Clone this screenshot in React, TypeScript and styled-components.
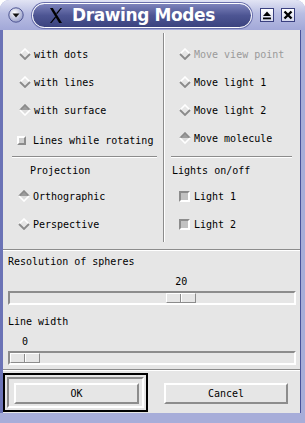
import React from 'react';
import styled, { createGlobalStyle } from 'styled-components';

const GlobalStyle = createGlobalStyle`
  html, body { margin: 0; padding: 0; background: #ffffff; }
  * { box-sizing: border-box; }
`;

const BG = '#e6e6e6';
const SHADOW = '#8c8c8c';
const LIGHT = '#ffffff';

const Window = styled.div`
  width: 305px;
  height: 423px;
  display: flex;
  flex-direction: column;
  background: #a7add9;
  border-radius: 9px 9px 0 0;
  overflow: hidden;
  font-family: "DejaVu Sans Mono", "Liberation Mono", monospace;
  font-size: 10px;
  color: #000;
`;

const TitleBar = styled.div`
  height: 30px;
  flex: none;
  display: flex;
  align-items: center;
  padding: 0 10px 0 8px;
  background: linear-gradient(180deg, #e2e4f4 0%, #b9bee3 45%, #a2a8d8 100%);
`;

const TitlePill = styled.div`
  margin-left: 8px;
  width: 220px;
  height: 25px;
  border-radius: 13px;
  border: 1.5px solid #ffffff;
  box-shadow: 0 0 0 1px #6a70ac;
  background: linear-gradient(180deg, #7d83bb 0%, #4d5593 50%, #3b437f 100%);
  display: flex;
  align-items: center;
  gap: 10px;
  padding-left: 17px;
  color: #ffffff;
  font-family: "DejaVu Sans", "Liberation Sans", sans-serif;
  font-weight: 700;
  font-size: 17px;
  letter-spacing: -0.4px;
`;

const TitleButtons = styled.div`
  margin-left: auto;
  display: flex;
  gap: 7px;
`;

const TitleButton = styled.div`
  width: 14px;
  height: 14px;
  border: 1px solid #3a4080;
  background: linear-gradient(180deg, #ffffff, #d6d9ee);
  display: flex;
  align-items: center;
  justify-content: center;
`;

const Body = styled.div`
  flex: 1;
  display: flex;
  flex-direction: column;
  margin: 0 4px 10px 0;
  background: ${BG};
  border-left: 3px solid #6b73b6;
  border-right: 1px solid #4a5299;
`;

const Options = styled.div`
  height: 219px;
  flex: none;
  display: flex;
`;

const Column = styled.div<{ $width?: number }>`
  ${p => (p.$width ? `width: ${p.$width}px;` : 'flex: 1;')}
  display: flex;
  flex-direction: column;
`;

const ColTop = styled.div`
  height: 126px;
  padding-top: 10px;
  display: flex;
  flex-direction: column;
`;

const VSep = styled.div`
  width: 2px;
  margin: 3px 0 7px;
  border-left: 1px solid ${SHADOW};
  border-right: 1px solid ${LIGHT};
`;

const Etched = styled.div<{ $left?: number; $right?: number; $top?: number }>`
  height: 2px;
  flex: none;
  border-top: 1px solid ${SHADOW};
  border-bottom: 1px solid ${LIGHT};
  margin: ${p => p.$top ?? 0}px ${p => p.$right ?? 0}px 0 ${p => p.$left ?? 0}px;
`;

const Row = styled.div<{ $indent: number; $height?: number; $gap?: number }>`
  height: ${p => p.$height ?? 28}px;
  flex: none;
  display: flex;
  align-items: center;
  gap: ${p => p.$gap ?? 3}px;
  padding-left: ${p => p.$indent}px;
  white-space: nowrap;
`;

const Label = styled.span<{ $disabled?: boolean }>`
  color: ${p => (p.$disabled ? '#9a9a9a' : '#000')};
`;

const Heading = styled.div<{ $indent: number }>`
  height: 24px;
  display: flex;
  align-items: center;
  padding-left: ${p => p.$indent}px;
`;

const SmallCheck = styled.span`
  width: 9px;
  height: 9px;
  flex: none;
  background: #cfcfcf;
  border: 2px solid;
  border-color: ${LIGHT} ${SHADOW} ${SHADOW} ${LIGHT};
`;

const LightCheck = styled.span`
  width: 11px;
  height: 11px;
  flex: none;
  background: #c2c2c2;
  border: 2px solid;
  border-color: ${SHADOW} ${LIGHT} ${LIGHT} ${SHADOW};
`;

const SliderBlock = styled.div`
  padding: 0 4px 0 5px;
`;

const SliderLabel = styled.div<{ $top: number }>`
  height: 12px;
  line-height: 12px;
  margin-top: ${p => p.$top}px;
`;

const ValueRow = styled.div`
  height: 12px;
  line-height: 12px;
  margin-top: 8px;
`;

const Trough = styled.div`
  height: 14px;
  margin-top: 3px;
  position: relative;
  background: ${BG};
  border: 2px solid;
  border-color: ${SHADOW} ${LIGHT} ${LIGHT} ${SHADOW};
`;

const Thumb = styled.div`
  position: absolute;
  top: 0;
  width: 30px;
  height: 10px;
  display: flex;
  background: ${BG};
  border: 1px solid;
  border-color: ${LIGHT} ${SHADOW} ${SHADOW} ${LIGHT};
`;

const ThumbHalf = styled.span`
  flex: 1;
  & + & {
    border-left: 1px solid ${LIGHT};
  }
  &:first-child {
    border-right: 1px solid ${SHADOW};
  }
`;

const ButtonRow = styled.div`
  display: flex;
  align-items: flex-start;
  margin-top: 2px;
`;

const DefaultFrame = styled.div`
  border: 2px solid #000;
  padding: 2px;
`;

const DefaultWell = styled.div`
  border: 2px solid;
  border-color: ${SHADOW} ${LIGHT} ${LIGHT} ${SHADOW};
  padding: 4px 3px 2px 5px;
`;

const Button = styled.button<{ $width: number; $offset?: number }>`
  width: ${p => p.$width}px;
  height: 21px;
  margin: ${p => (p.$offset ? `10px 0 0 ${p.$offset}px` : '0')};
  padding: 0;
  background: ${BG};
  border: 2px solid;
  border-color: ${LIGHT} ${SHADOW} ${SHADOW} ${LIGHT};
  font-family: "DejaVu Sans Mono", "Liberation Mono", monospace;
  font-size: 10px;
  color: #000;
`;

const Diamond = ({ on }: { on?: boolean }) => (
  <svg width="12" height="12" viewBox="0 0 12 12" style={{ flex: 'none' }}>
    {on ? (
      <>
        <polygon points="1,6 6,1 11,6" fill="#9c9c9c" />
        <polygon points="1,6 6,11 11,6" fill="#dcdcdc" />
        <polyline points="1,6 6,1 11,6" fill="none" stroke="#8a8a8a" strokeWidth="1.6" />
        <polyline points="1,6 6,11 11,6" fill="none" stroke="#ffffff" strokeWidth="1.6" />
      </>
    ) : (
      <>
        <polygon points="1,6 6,1 11,6 6,11" fill="#e6e6e6" />
        <polyline points="1,6 6,1 11,6" fill="none" stroke="#ffffff" strokeWidth="1.6" />
        <polyline points="1,6 6,11 11,6" fill="none" stroke="#8a8a8a" strokeWidth="1.8" />
      </>
    )}
  </svg>
);

const Radio = ({ label, on, indent, disabled }: { label: string; on?: boolean; indent: number; disabled?: boolean }) => (
  <Row $indent={indent}>
    <Diamond on={on} />
    <Label $disabled={disabled}>{label}</Label>
  </Row>
);

const Slider = ({ label, value, min, max, top }: { label: string; value: number; min: number; max: number; top: number }) => {
  const travel = 284 - 30;
  const left = ((value - min) / (max - min)) * travel;
  const text = String(value);
  const pad = 2 + left + 15 - (text.length * 6) / 2;
  return (
    <SliderBlock>
      <SliderLabel $top={top}>{label}</SliderLabel>
      <ValueRow style={{ paddingLeft: pad }}>{text}</ValueRow>
      <Trough>
        <Thumb style={{ left }}>
          <ThumbHalf />
          <ThumbHalf />
        </Thumb>
      </Trough>
    </SliderBlock>
  );
};

const MenuIcon = () => (
  <svg width="16" height="16" viewBox="0 0 16 16">
    <defs>
      <radialGradient id="mb" cx="40%" cy="35%" r="70%">
        <stop offset="0%" stopColor="#ffffff" />
        <stop offset="100%" stopColor="#9299c6" />
      </radialGradient>
    </defs>
    <circle cx="8" cy="8" r="7.2" fill="url(#mb)" stroke="#4f5693" strokeWidth="1" />
    <polygon points="4.5,6.5 11.5,6.5 8,10.5" fill="#111" />
  </svg>
);

const XLogo = () => (
  <svg width="12" height="15" viewBox="0 0 12 15">
    <polygon points="0,0 2.8,0 12,15 9.2,15" fill="#000" />
    <polygon points="10.6,0 12,0 7,6.2 6.2,5.3" fill="#000" />
    <polygon points="5.2,8.6 6,9.6 1.4,15 0,15" fill="#000" />
  </svg>
);

const EjectIcon = () => (
  <svg width="10" height="10" viewBox="0 0 10 10">
    <polygon points="1,6 5,1.5 9,6" fill="#000" />
    <rect x="1" y="7.5" width="8" height="1.8" fill="#000" />
  </svg>
);

const CloseIcon = () => (
  <svg width="10" height="10" viewBox="0 0 10 10">
    <path d="M1.5 1.5 L8.5 8.5 M8.5 1.5 L1.5 8.5" stroke="#000" strokeWidth="2.4" />
  </svg>
);

export default function App() {
  return (
    <>
      <GlobalStyle />
      <Window>
        <TitleBar>
          <MenuIcon />
          <TitlePill>
            <XLogo />
            <span>Drawing Modes</span>
          </TitlePill>
          <TitleButtons>
            <TitleButton><EjectIcon /></TitleButton>
            <TitleButton><CloseIcon /></TitleButton>
          </TitleButtons>
        </TitleBar>
        <Body>
          <Options>
            <Column $width={160}>
              <ColTop>
                <Radio label="with dots" indent={16} />
                <Radio label="with lines" indent={16} />
                <Radio label="with surface" indent={16} on />
                <Row $indent={14} $height={32} $gap={7}>
                  <SmallCheck />
                  <Label>Lines while rotating</Label>
                </Row>
              </ColTop>
              <Etched $left={9} $right={6} />
              <Heading $indent={27}>Projection</Heading>
              <Radio label="Orthographic" indent={15} on />
              <Radio label="Perspective" indent={15} />
            </Column>
            <VSep />
            <Column>
              <ColTop>
                <Radio label="Move view point" indent={14} disabled />
                <Radio label="Move light 1" indent={14} />
                <Radio label="Move light 2" indent={14} />
                <Radio label="Move molecule" indent={14} on />
              </ColTop>
              <Etched $left={6} $right={8} />
              <Heading $indent={7}>Lights on/off</Heading>
              <Row $indent={14} $gap={4}>
                <LightCheck />
                <Label>Light 1</Label>
              </Row>
              <Row $indent={14} $gap={4}>
                <LightCheck />
                <Label>Light 2</Label>
              </Row>
            </Column>
          </Options>
          <Etched />
          <Slider label="Resolution of spheres" value={20} min={4} max={30} top={5} />
          <Slider label="Line width" value={0} min={0} max={10} top={11} />
          <Etched $top={4} />
          <ButtonRow>
            <DefaultFrame>
              <DefaultWell>
                <Button $width={125}>OK</Button>
              </DefaultWell>
            </DefaultFrame>
            <Button $width={124} $offset={16}>Cancel</Button>
          </ButtonRow>
        </Body>
      </Window>
    </>
  );
}
